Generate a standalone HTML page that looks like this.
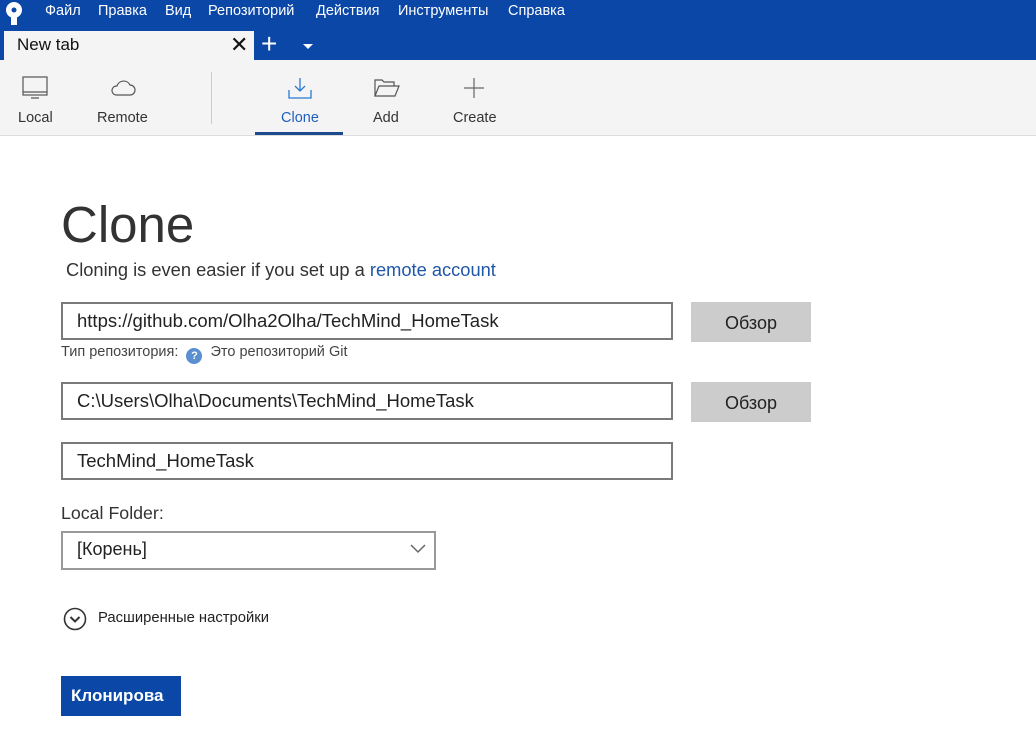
<!DOCTYPE html>
<html><head><meta charset="utf-8"><style>
*{box-sizing:border-box;margin:0;padding:0}
body{width:1036px;height:753px;overflow:hidden;background:#fff;font-family:"Liberation Sans","DejaVu Sans",sans-serif;color:#222;position:relative}
.a{position:absolute}
.top{left:0;top:0;width:1036px;height:60px;background:#0a47a7}
.menu span{position:absolute;top:3px;color:#fff;font-size:14.5px}
.tb{left:0;top:60px;width:1036px;height:76px;background:#f4f4f4;border-bottom:1px solid #ddd}
.lbl{font-size:14.5px;color:#333;top:110px}
.inp{border:2px solid #7a7a7a;background:#fff;height:38px;font-size:18.5px;padding:6px 14px;color:#222;white-space:nowrap}
.btn{background:#cccccc;width:120px;height:40px;font-size:18px;text-align:center;line-height:42px;color:#222}
</style></head><body>
<div class="a top"></div>
<svg class="a" style="left:4px;top:2px" width="20" height="24" viewBox="0 0 20 24"><circle cx="10" cy="8" r="8" fill="#fff"/><rect x="7" y="12" width="6" height="11" fill="#fff"/><circle cx="10" cy="8" r="2.5" fill="#0a47a7"/></svg>
<div class="menu"><span style="left:45px">Файл</span><span style="left:98px">Правка</span><span style="left:165px">Вид</span><span style="left:208px">Репозиторий</span><span style="left:316px">Действия</span><span style="left:398px">Инструменты</span><span style="left:508px">Справка</span></div>
<div class="a" style="left:4px;top:31px;width:250px;height:30px;background:#f4f4f4"></div>
<div class="a" style="left:17px;top:35px;font-size:17px;color:#111">New tab</div>
<div class="a" style="left:230px;top:32px;font-size:22px;color:#111">✕</div>
<div class="a" style="left:261px;top:28px;font-size:28px;color:#fff;font-weight:300">+</div>
<div class="a" style="left:303px;top:44px;width:0;height:0;border-left:5px solid transparent;border-right:5px solid transparent;border-top:5px solid #fff"></div>
<div class="a tb"></div>
<svg class="a" style="left:22px;top:76px" width="28" height="24" viewBox="0 0 28 24" fill="none" stroke="#555" stroke-width="1.2"><rect x="1" y="1" width="24" height="18"/><path d="M1 16h24M9 22h8"/></svg>
<svg class="a" style="left:110px;top:78px" width="26" height="18" viewBox="0 0 26 18" fill="none" stroke="#555" stroke-width="1.2"><path d="M6 17h14a5 5 0 0 0 0-10 7 7 0 0 0-13 1 4.5 4.5 0 0 0-1 9z"/></svg>
<div class="a" style="left:211px;top:72px;width:1px;height:52px;background:#ccc"></div>
<svg class="a" style="left:287px;top:77px" width="26" height="22" viewBox="0 0 26 22" fill="none" stroke="#2a7ad4" stroke-width="1.3"><path d="M13 1v13M8 9l5 5 5-5M2 13v8h22v-8"/></svg>
<svg class="a" style="left:374px;top:79px" width="26" height="18" viewBox="0 0 26 18" fill="none" stroke="#555" stroke-width="1.2"><path d="M1 17V1h7l2 2h10v4M1 17l4-10h20l-4 10z"/></svg>
<svg class="a" style="left:463px;top:77px" width="22" height="22" viewBox="0 0 22 22" stroke="#666" stroke-width="1.2"><path d="M11 1v20M1 11h20"/></svg>
<div class="a lbl" style="left:18px">Local</div>
<div class="a lbl" style="left:97px">Remote</div>
<div class="a lbl" style="left:281px;color:#1f5fbf">Clone</div>
<div class="a lbl" style="left:373px">Add</div>
<div class="a lbl" style="left:453px">Create</div>
<div class="a" style="left:255px;top:132px;width:88px;height:3px;background:#1c4a8c"></div>
<div class="a" style="left:61px;top:195px;font-size:51px;color:#333">Clone</div>
<div class="a" style="left:66px;top:259px;font-size:18.3px;color:#333">Cloning is even easier if you set up a <span style="color:#1f56a8">remote account</span></div>
<div class="a inp" style="left:61px;top:302px;width:612px">https://github.com/Olha2Olha/TechMind_HomeTask</div>
<div class="a btn" style="left:691px;top:302px">Обзор</div>
<div class="a" style="left:61px;top:344px;font-size:14.5px;color:#444">Тип репозитория: <span style="display:inline-block;width:16px;height:16px;border-radius:50%;background:#5a8fd0;color:#fff;font-size:11px;text-align:center;line-height:16px;font-weight:bold;vertical-align:-3px;margin:0 4px">?</span> Это репозиторий Git</div>
<div class="a inp" style="left:61px;top:382px;width:612px">C:\Users\Olha\Documents\TechMind_HomeTask</div>
<div class="a btn" style="left:691px;top:382px">Обзор</div>
<div class="a inp" style="left:61px;top:442px;width:612px">TechMind_HomeTask</div>
<div class="a" style="left:61px;top:503px;font-size:17.8px;color:#333">Local Folder:</div>
<div class="a inp" style="left:61px;top:531px;width:375px;height:39px;border-width:2px;border-color:#999;font-size:18px">[Корень]</div>
<svg class="a" style="left:409px;top:543px" width="18" height="12" viewBox="0 0 18 12" fill="none" stroke="#666" stroke-width="1.5"><path d="M2 2l7 7 7-7"/></svg>
<svg class="a" style="left:63px;top:607px" width="24" height="24" viewBox="0 0 24 24" fill="none" stroke="#333" stroke-width="1.6"><circle cx="12" cy="12" r="10.5"/><path d="M7.5 10l4.5 4.5 4.5-4.5" stroke-width="2"/></svg>
<div class="a" style="left:98px;top:610px;font-size:14.8px;color:#222">Расширенные настройки</div>
<div class="a" style="left:61px;top:676px;width:120px;height:40px;background:#0a47a7;color:#fff;font-weight:bold;font-size:17px;line-height:40px;padding-left:10px;overflow:hidden;white-space:nowrap">Клонирова</div>
</body></html>
